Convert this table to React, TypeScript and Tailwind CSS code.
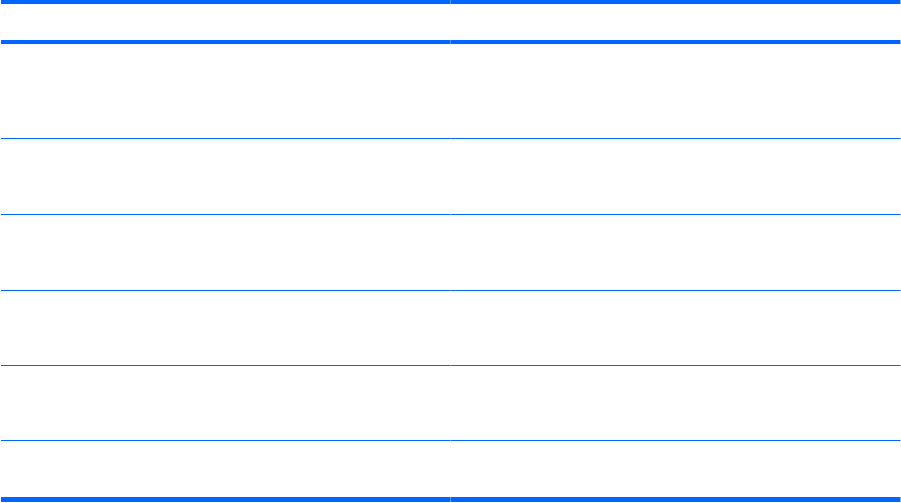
import React from "react";

function Rule({ h }: { h: string }) {
  return (
    <div className={`flex ${h}`}>
      <div className="w-[449px] bg-[#0066ff]" />
      <div className="w-px bg-[#5c9cff]" />
      <div className="w-[449px] bg-[#0066ff]" />
      <div className="w-px bg-[#8fbaff]" />
    </div>
  );
}

function Row({ h }: { h: string }) {
  return (
    <div className={`grid grid-cols-[450px_450px] ${h}`}>
      <div />
      <div />
    </div>
  );
}

export default function App() {
  return (
    <div className="w-[901px] h-[503px] bg-white overflow-hidden font-['Liberation_Sans',sans-serif]">
      <div className="ml-px flex flex-col">
        <Rule h="h-[4px]" />
        <Row h="h-[36px]" />
        <Rule h="h-[4px]" />
        <Row h="h-[94px]" />
        <Rule h="h-px" />
        <Row h="h-[75px]" />
        <Rule h="h-px" />
        <Row h="h-[75px]" />
        <Rule h="h-px" />
        <Row h="h-[74px]" />
        <Rule h="h-px" />
        <Row h="h-[74px]" />
        <Rule h="h-px" />
        <Row h="h-[56px]" />
        <Rule h="h-[5px]" />
      </div>
    </div>
  );
}
